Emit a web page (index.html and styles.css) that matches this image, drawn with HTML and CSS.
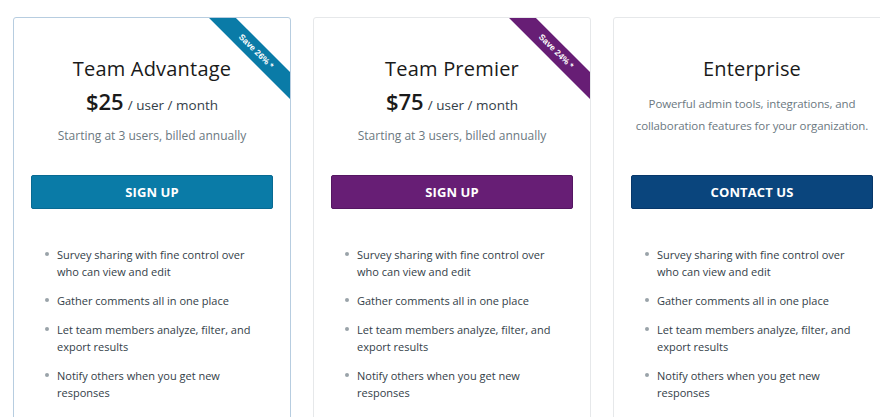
FILE: index.html
```html
<!DOCTYPE html>
<html>
<head>
<meta charset="utf-8">
<link rel="stylesheet" href="styles.css">
</head>
<body>
<div class="plans">
  <div class="card card-selected">
    <div class="ribbon ribbon-blue"><span>Save 26% *</span></div>
    <div class="head">
      <h2 class="title">Team Advantage</h2>
      <div class="price"><span class="amount">$25</span> <span class="unit">/ user / month</span></div>
      <p class="note">Starting at 3 users, billed annually</p>
    </div>
    <a class="btn btn-blue">SIGN UP</a>
    <ul class="features">
      <li>Survey sharing with fine control over who can view and edit</li>
      <li>Gather comments all in one place</li>
      <li>Let team members analyze, filter, and export results</li>
      <li>Notify others when you get new responses</li>
    </ul>
  </div>
  <div class="card">
    <div class="ribbon ribbon-purple"><span>Save 24% *</span></div>
    <div class="head">
      <h2 class="title">Team Premier</h2>
      <div class="price"><span class="amount">$75</span> <span class="unit">/ user / month</span></div>
      <p class="note">Starting at 3 users, billed annually</p>
    </div>
    <a class="btn btn-purple">SIGN UP</a>
    <ul class="features">
      <li>Survey sharing with fine control over who can view and edit</li>
      <li>Gather comments all in one place</li>
      <li>Let team members analyze, filter, and export results</li>
      <li>Notify others when you get new responses</li>
    </ul>
  </div>
  <div class="card">
    <div class="head">
      <h2 class="title">Enterprise</h2>
      <p class="desc">Powerful admin tools, integrations, and collaboration features for your organization.</p>
    </div>
    <a class="btn btn-navy">CONTACT US</a>
    <ul class="features">
      <li>Survey sharing with fine control over who can view and edit</li>
      <li>Gather comments all in one place</li>
      <li>Let team members analyze, filter, and export results</li>
      <li>Notify others when you get new responses</li>
    </ul>
  </div>
</div>
</body>
</html>
```
FILE: styles.css
```css
html, body {
  margin: 0;
  padding: 0;
  background: #ffffff;
  overflow: hidden;
}
body {
  font-family: "Open Sans", "Liberation Sans", sans-serif;
  color: #333e48;
  width: 880px;
  height: 417px;
}
.plans {
  display: flex;
  gap: 22px;
  padding: 17px 0 0 13px;
}
.card {
  position: relative;
  flex: 0 0 278px;
  box-sizing: border-box;
  height: 420px;
  border: 1px solid #e6e8ea;
  border-radius: 3px;
  padding: 0 17px;
  overflow: hidden;
  display: flex;
  flex-direction: column;
  align-items: center;
}
.card-selected {
  border-color: #b7cde0;
}
.ribbon {
  position: absolute;
  top: 0;
  right: 0;
  width: 81px;
  height: 81px;
  overflow: hidden;
}
.ribbon span {
  position: absolute;
  top: 24px;
  left: -13px;
  width: 120px;
  height: 19px;
  line-height: 19px;
  transform: rotate(45deg);
  text-align: center;
  color: #fff;
  font-family: "Liberation Sans", Arial, sans-serif;
  font-weight: 700;
  font-size: 8.5px;
}
.ribbon-blue span { background: #0a7ba7; }
.ribbon-purple span { background: #671e75; }
.head {
  box-sizing: border-box;
  height: 157px;
  padding-top: 38px;
  display: flex;
  flex-direction: column;
  align-items: center;
  align-self: stretch;
}
.title {
  margin: 0;
  font-size: 20px;
  font-weight: 500;
  color: #1a1a1a;
  line-height: 26px;
  letter-spacing: 0.2px;
}
.price {
  margin-top: 4px;
  line-height: 30px;
}
.amount {
  font-size: 22px;
  font-weight: 600;
  color: #1a1a1a;
}
.unit {
  font-size: 13.5px;
  color: #333e48;
}
.note {
  margin: 7px 0 0;
  font-size: 12px;
  color: #6b787f;
  line-height: 18px;
}
.desc {
  margin: 11px -8px 0;
  font-size: 11.5px;
  letter-spacing: -0.1px;
  color: #6b787f;
  line-height: 22px;
  text-align: center;
}
.btn {
  display: flex;
  align-items: center;
  justify-content: center;
  box-sizing: border-box;
  width: 242px;
  height: 34px;
  border-radius: 2px;
  color: #fff;
  font-weight: 700;
  font-size: 13px;
  letter-spacing: 0.1px;
}
.btn-blue { background: #0a7ba7; border: 1px solid #086a92; }
.btn-purple { background: #671e75; border: 1px solid #551662; }
.btn-navy { background: #0a457d; border: 1px solid #07376a; }
.features {
  align-self: stretch;
  margin: 37px 0 0;
  padding: 0 0 0 26px;
  list-style: none;
}
.features li {
  position: relative;
  font-size: 11px;
  line-height: 17px;
  color: #333e48;
  margin-bottom: 12px;
  padding-right: 16px;
}
.features li::before {
  content: "";
  position: absolute;
  left: -12px;
  top: 6px;
  width: 4px;
  height: 4px;
  border-radius: 50%;
  background: #9aa3a9;
}
```
